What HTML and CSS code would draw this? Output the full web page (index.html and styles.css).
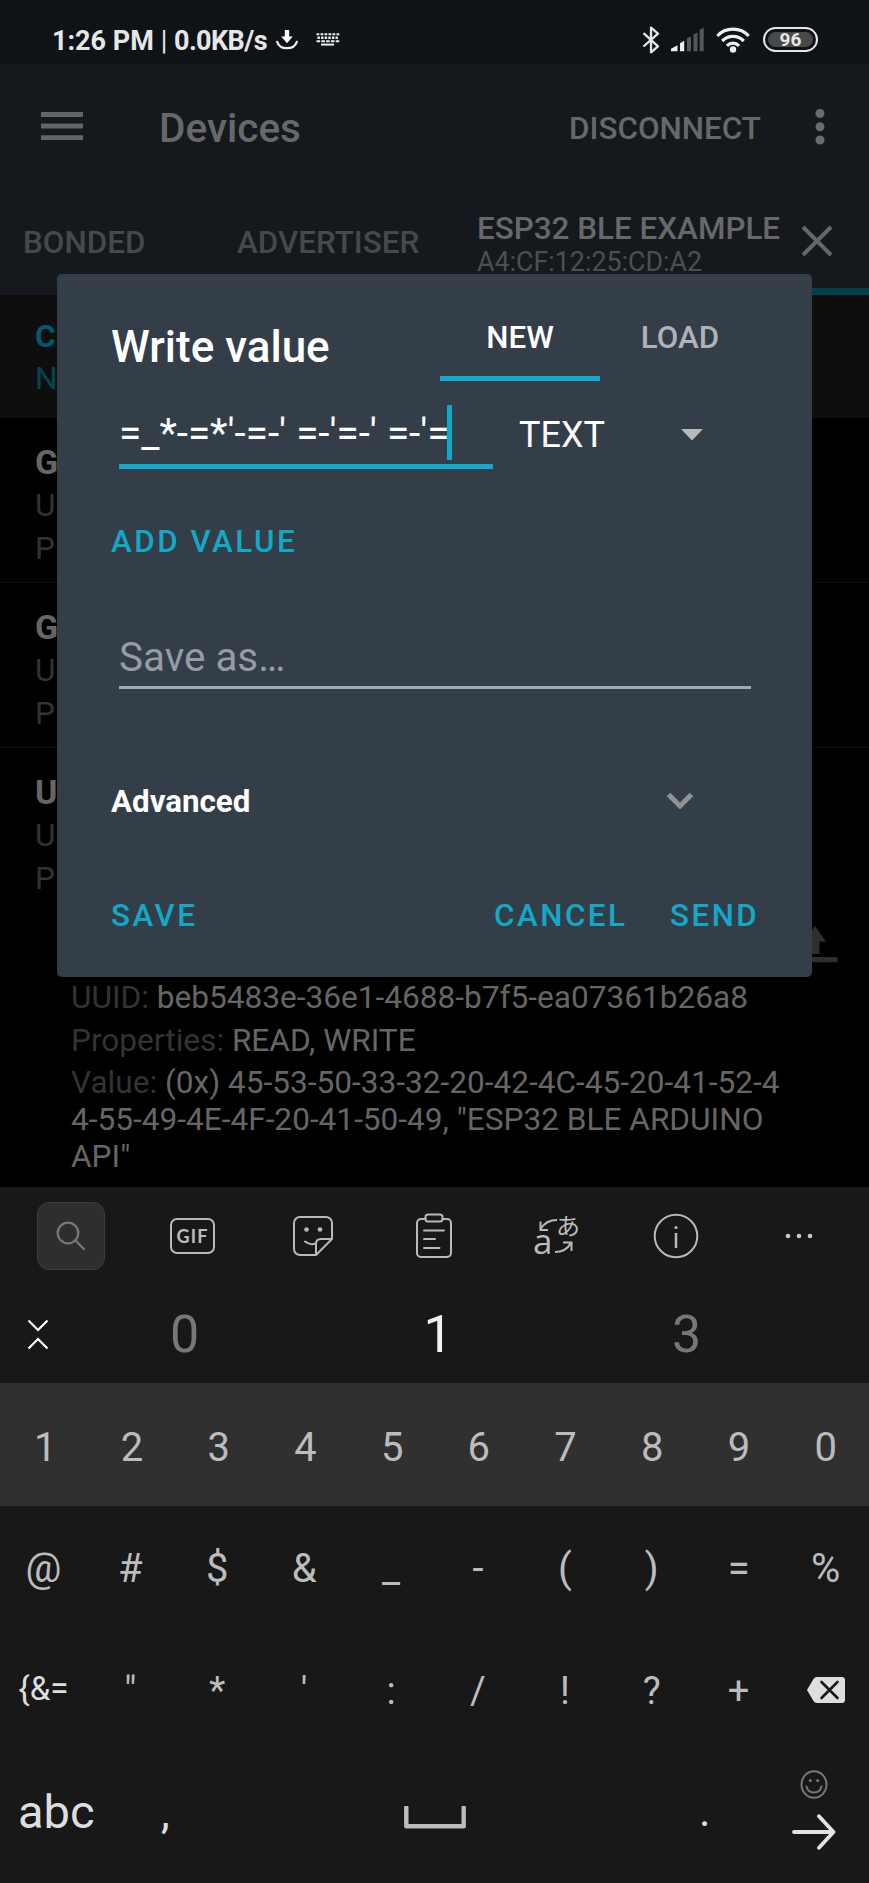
FILE: index.html
```html
<!DOCTYPE html>
<html lang="en">
<head>
<meta charset="utf-8">
<title>Devices</title>
<link rel="stylesheet" href="styles.css">
</head>
<body>
<div class="phone">
  <header class="status">
    <span class="status-time">1:26 PM</span><span class="status-sep">|</span><span class="status-rate">0.0KB/s</span>
    <svg class="ic-download" width="22" height="20" viewBox="0 0 22 20"><path d="M11 1.5v6" stroke="#fff" stroke-width="4.4" stroke-linecap="round"/><path d="M5.2 6.5h11.6L11 13.2z" fill="#fff"/><path d="M1.2 11.8C4 20.3 18 20.3 20.8 11.8" fill="none" stroke="#eee" stroke-width="2.2" stroke-linecap="round"/></svg>
    <svg class="ic-keyboard" width="24" height="13" viewBox="0 0 24 13"><g stroke="#eee" fill="none"><path d="M.5 1.3h23" stroke-width="2" stroke-dasharray="2.8 1.2"/><path d="M1.5 4.8h21" stroke-width="2.4" stroke-dasharray="2.4 1.2"/><path d="M.5 8.3h23" stroke-width="2" stroke-dasharray="3.6 1.2"/><path d="M5 11.6h13" stroke-width="2"/></g></svg>
    <span class="spacer"></span>
    <svg class="ic-bt" width="18" height="28" viewBox="0 0 18 28"><path d="M1.5 7.2 16 20.3 9 26.3V1.7l7 6L1.5 20.5" fill="none" stroke="#e6e6e6" stroke-width="2.3" stroke-linejoin="round"/></svg>
    <svg class="ic-signal" width="33" height="25" viewBox="0 0 33 25"><path d="M0 24.3v-2.6l6.5-3.4v6zM9 24.3v-8l4.200-2.500v10.500z" fill="#eee"/><path d="M16 24.300v-13l4-2v15zM22.500 24.300V7.500l4-2v18.800zM28.700 24.300V2.800l4-2.300v23.800z" fill="#55585a"/></svg>
    <svg class="ic-wifi" width="34" height="26" viewBox="0 0 34 26"><g fill="none" stroke="#eee" stroke-width="3.300"><path d="M1.300 9C9.500-.2 24.500-.2 32.700 9"/><path d="M6.200 14c6-6.200 15.600-6.200 21.600 0"/><path d="M11 18.800c3.500-3.500 8.500-3.500 12 0"/></g><circle cx="17" cy="22.500" r="3.200" fill="#eee"/></svg>
    <span class="battery"><span class="battery-level">96</span></span>
  </header>

  <div class="appbar">
    <svg class="ic-menu" width="42" height="28" viewBox="0 0 42 28"><path d="M0 2.500h42M0 14h42M0 25.700h42" stroke="#636465" stroke-width="4.800"/></svg>
    <span class="appbar-title">Devices</span>
    <span class="appbar-action">DISCONNECT</span>
    <svg class="ic-more" width="10" height="38" viewBox="0 0 10 38"><g fill="#6b6c6d"><circle cx="5" cy="5.500" r="4.500"/><circle cx="5" cy="18.800" r="4.500"/><circle cx="5" cy="32" r="4.500"/></g></svg>
  </div>

  <nav class="tabs">
    <span class="tab tab-bonded">BONDED</span>
    <span class="tab tab-adv">ADVERTISER</span>
    <div class="tab-device">
      <span class="device-name">ESP32 BLE EXAMPLE</span>
      <span class="device-mac">A4:CF:12:25:CD:A2</span>
    </div>
    <svg class="ic-close" width="32" height="32" viewBox="0 0 32 32"><path d="M2 2l28 28M30 2 2 30" stroke="#656769" stroke-width="4"/></svg>
    <div class="tab-line"></div>
  </nav>

  <main class="list">
    <div class="conn"><b>C</b><span>N</span></div>
    <div class="service"><b>G</b><span>U</span><span>P</span></div>
    <div class="service"><b>G</b><span>U</span><span>P</span></div>
    <div class="service service-last"><b>U</b><span>U</span><span>P</span></div>
    <div class="char">
      <svg class="ic-upload" width="46" height="37" viewBox="0 0 46 37"><path d="M23 0 34 15.500h-6.500V28h-9V15.500H12zM1 31h44.500v5.300H1z" fill="#2e2e2e"/></svg>
      <p class="char-row"><span class="dim">UUID:</span> beb5483e-36e1-4688-b7f5-ea07361b26a8</p>
      <p class="char-row"><span class="dim">Properties:</span> READ, WRITE</p>
      <p class="char-value"><span class="dim">Value:</span> (0x) 45-53-50-33-32-20-42-4C-45-20-41-52-4<br>4-55-49-4E-4F-20-41-50-49, "ESP32 BLE ARDUINO<br>API"</p>
    </div>
  </main>

  <section class="keyboard">
    <div class="tools">
      <span class="tool-search"><svg width="30" height="30" viewBox="0 0 30 30"><g fill="none" stroke="#777" stroke-width="2.300" stroke-linecap="round"><circle cx="12" cy="12" r="10.300"/><path d="m19.500 19.500 8.500 8.500"/></g></svg></span>
      <span class="tool-gif">GIF</span>
      <svg class="tool-sticker" width="42" height="42" viewBox="0 0 42 42"><g fill="none" stroke="#b9b9b9" stroke-width="2" stroke-linejoin="round" stroke-linecap="round"><path d="M24 40H8a6 6 0 0 1-6-6V8a6 6 0 0 1 6-6h26a6 6 0 0 1 6 6v16L24 40V29q0-5 5-5h11"/><path d="M13 26.500q5 4 10.500 2"/></g><circle cx="14.500" cy="14.500" r="2.300" fill="#b9b9b9"/><circle cx="28" cy="14.500" r="2.300" fill="#b9b9b9"/></svg>
      <svg class="tool-clip" width="38" height="46" viewBox="0 0 38 46"><g fill="none" stroke="#b9b9b9" stroke-width="2" stroke-linecap="round"><rect x="10.500" y="1.500" width="17" height="7" rx="2.500"/><path d="M10.500 6H6a4 4 0 0 0-4 4v30a4 4 0 0 0 4 4h26a4 4 0 0 0 4-4V10a4 4 0 0 0-4-4h-4.500M9 17.500h20M9 26h11M9 35h15.500"/></g></svg>
      <span class="tool-lang"><span class="lang-a">a</span><span class="lang-ja">あ</span><svg class="lang-arrows" width="46" height="46" viewBox="0 0 46 46"><g fill="none" stroke="#b9b9b9" stroke-width="2"><path d="M24 7Q13 7 7.500 16M7.500 8.500V17H15M22 39q11 0 15.500-8.500M30 29.500h8.500V38"/></g></svg></span>
      <svg class="tool-info" width="46" height="46" viewBox="0 0 46 46"><circle cx="23" cy="23" r="21.300" fill="none" stroke="#b9b9b9" stroke-width="2"/><path d="M23 20v15" stroke="#b9b9b9" stroke-width="2.500"/><circle cx="23" cy="14.500" r="1.600" fill="#b9b9b9"/></svg>
      <svg class="tool-dots" width="28" height="6" viewBox="0 0 28 6"><g fill="#c8c8c8"><circle cx="3" cy="3" r="2.300"/><circle cx="14" cy="3" r="2.300"/><circle cx="25" cy="3" r="2.300"/></g></svg>
    </div>
    <div class="suggest">
      <svg class="ic-collapse" width="22" height="31" viewBox="0 0 22 31"><path d="m1.500 1.500 9.500 9.500L20.500 1.500M1.500 29.500 11 20l9.500 9.500" fill="none" stroke="#fff" stroke-width="2.200"/></svg>
      <span class="sg">0</span><span class="sg sg-main">1</span><span class="sg">3</span>
    </div>
    <div class="keys keys-num"><span>1</span><span>2</span><span>3</span><span>4</span><span>5</span><span>6</span><span>7</span><span>8</span><span>9</span><span>0</span></div>
    <div class="keys"><span>@</span><span>#</span><span>$</span><span>&amp;</span><span>_</span><span>-</span><span>(</span><span>)</span><span>=</span><span>%</span></div>
    <div class="keys keys-punct"><span class="key-more">{&amp;=</span><span>"</span><span>*</span><span>'</span><span>:</span><span>/</span><span>!</span><span>?</span><span>+</span><span class="key-del"><svg width="40" height="28" viewBox="0 0 40 28"><path d="M1 14 7.500 3Q9 1 11 1h25q3 0 3 3v20q0 3-3 3H11q-2 0-3.500-2z" fill="#dedede"/><path d="m15.500 6 16 16M31.500 6l-16 16" stroke="#181818" stroke-width="2.600" stroke-linecap="round"/></svg></span></div>
    <div class="bottom">
      <span class="key-abc">abc</span>
      <span class="key-comma">,</span>
      <svg class="ic-space" width="62" height="23" viewBox="0 0 62 23"><path d="M2.300 1.500v18.700h57.400V1.500" fill="none" stroke="#bcbcbc" stroke-width="4.400" stroke-linejoin="round" stroke-linecap="round"/></svg>
      <span class="key-dot">.</span>
      <div class="enter">
        <svg width="28" height="29" viewBox="0 0 28 29"><g fill="none" stroke="#777" stroke-width="2"><ellipse cx="14" cy="14.500" rx="12.500" ry="13.200"/><path d="M6.500 16.500q1.500 6 7.500 6t7.500-6" stroke-linecap="round"/></g><circle cx="10.300" cy="10.500" r="1.600" fill="#777"/><circle cx="17.700" cy="10.500" r="1.600" fill="#777"/></svg>
        <svg class="ic-arrow" width="44" height="36" viewBox="0 0 44 36"><path d="M2 18h39M27 2.200 41.500 18 27 33.800" fill="none" stroke="#e2e2e2" stroke-width="3.800" stroke-linecap="round" stroke-linejoin="round"/></svg>
      </div>
    </div>
  </section>

  <div class="dialog">
    <div class="dlg-head">
      <h1 class="dlg-title">Write value</h1>
      <span class="dlg-tab dlg-tab-on">NEW</span>
      <span class="dlg-tab">LOAD</span>
    </div>
    <div class="dlg-entry">
      <div class="dlg-input"><span class="dlg-text">=_*-=*'-=-' =-'=-' =-'=</span><span class="caret"></span></div>
      <span class="dlg-type">TEXT</span>
      <svg class="ic-drop" width="22" height="12" viewBox="0 0 22 12"><path d="M0 0h22L11 11.500z" fill="#b7b9bb"/></svg>
    </div>
    <div class="dlg-add">ADD VALUE</div>
    <div class="dlg-save-as">Save as…</div>
    <div class="dlg-adv"><b>Advanced</b><svg width="28" height="18" viewBox="0 0 28 18"><path d="M2.500 2.500 14 14 25.500 2.500" fill="none" stroke="#8f9396" stroke-width="5"/></svg></div>
    <div class="dlg-actions"><span class="act-save">SAVE</span><span class="act-cancel">CANCEL</span><span class="act-send">SEND</span></div>
  </div>
</div>
</body>
</html>
```
FILE: styles.css
```css
* { box-sizing: border-box; }
body { margin: 0; background: #000; font-family: Roboto, "Noto Sans", sans-serif; }
svg { display: block; flex: none; }
p, h1 { margin: 0; }
.phone { position: relative; width: 869px; height: 1883px; overflow: hidden; background: #000; white-space: nowrap; }
.spacer { flex: 1; }

.status { display: flex; align-items: center; height: 64px; padding: 18px 51px 0 52px; background: #0f1216; color: #e6e6e6; font-weight: 700; font-size: 27px; line-height: 46px; }
.status-time { width: 102px; }
.status-sep { width: 20px; text-align: center; font-weight: 400; }
.status-rate { width: 90px; letter-spacing: -0.6px; }
.ic-download { margin: -3px 0 0 12px; }
.ic-keyboard { margin: -3px 0 0 18px; }
.ic-bt { margin: -3px 11px 0 0; }
.ic-signal { margin: -3px 12px 0 0; }
.ic-wifi { margin: -3px 13px 0 0; }
.battery { display: flex; width: 55px; height: 25px; margin-top: -3px; padding: 3px; border: 2px solid #e6e6e6; border-radius: 13px; }
.battery-level { flex: 1; border-radius: 8px; background: #47494b; font-size: 19px; line-height: 16px; text-align: center; }

.appbar { display: flex; align-items: center; height: 128px; padding: 0 44px 0 41px; background: #15191d; color: #66686a; font-weight: 500; }
.ic-menu { margin-top: -5px; }
.appbar-title { flex: 1; padding-left: 76px; font-size: 40.500px; }
.appbar-action { margin-right: 54px; font-size: 31.400px; }
.ic-more { margin-top: -3px; }

.tabs { position: relative; display: flex; height: 103px; background: #15191d; color: #46494c; font-size: 31.400px; font-weight: 500; line-height: 36px; }
.tab { padding-top: 33px; }
.tab-bonded { width: 237px; padding-left: 23px; }
.tab-adv { width: 240px; }
.tab-device { display: flex; flex-direction: column; width: 324px; padding-top: 19px; color: #66686a; }
.device-mac { margin-top: -3px; font-size: 26.800px; font-weight: 400; color: #4c4f52; }
.ic-close { margin-top: 33px; }
.tab-line { position: absolute; left: 477px; right: 0; bottom: 0; height: 7px; background: #003f4b; }

.list { height: 892px; font-size: 31.600px; }
.list b, .list .conn span, .list .service span { display: block; }
.conn { height: 123px; padding: 21px 0 0 35px; background: #0e0e0e; line-height: 42px; color: #004653; }
.conn b { color: #005a6b; }
.service { height: 165px; padding: 22px 0 0 35px; border-bottom: 1px solid #0d0d0d; line-height: 43px; color: #333; }
.service b { font-size: 34px; line-height: 44px; color: #666; }
.service-last { height: 177px; border: 0; }
.char { padding-left: 71px; color: #666; }
.dim { color: #333; }
.ic-upload { margin: 1px 0 13px 721px; }
.char-row { line-height: 43px; }
.char-value { margin-top: 2px; line-height: 37px; }

.keyboard { height: 696px; background: #181818; color: #bcbcbc; }
.tools { display: flex; align-items: center; height: 98px; padding-left: 37px; }
.tool-search { display: grid; place-items: center; width: 68px; height: 68px; border: 1px solid #3c3c3c; border-radius: 12px; background: #2e2e2e; }
.tool-gif { width: 45px; height: 36px; margin-left: 65px; border: 2px solid #b9b9b9; border-radius: 7px; font-family: Lato, sans-serif; font-size: 18px; font-weight: 700; line-height: 33px; letter-spacing: 1.200px; text-align: center; }
.tool-sticker { margin-left: 77px; }
.tool-clip { margin-left: 81px; }
.tool-lang { position: relative; width: 46px; height: 46px; margin-left: 80px; }
.lang-a { position: absolute; left: 0; top: 10px; font: 35px/35px "Open Sans", sans-serif; }
.lang-ja { position: absolute; left: 23px; top: -1px; font: 24px/25px "Noto Sans CJK JP", sans-serif; }
.lang-arrows { position: absolute; left: 0; top: 0; }
.tool-info { margin-left: 74px; }
.tool-dots { margin-left: 86px; }

.suggest { display: flex; align-items: center; height: 98px; padding: 0 58px 0 27px; }
.sg { flex: 0 0 251px; font-size: 52px; text-align: center; color: #777; }
.ic-collapse { margin-right: 10px; }
.sg-main { padding-left: 5px; color: #f2f2f2; }

.keys { display: grid; grid-template-columns: repeat(10, 1fr); height: 122px; padding-top: 2px; font-size: 40px; text-align: center; }
.keys span { display: grid; place-items: center; }
.keys-num { height: 123px; padding: 6px 0 0 2px; background: #303030; }
.keys-punct { padding-top: 4px; font-size: 38px; }
.keys .key-more { padding-bottom: 5px; font-size: 33px; color: #dedede; }
.keys .key-del { padding-bottom: 2px; }

.bottom { display: flex; height: 133px; color: #dedede; }
.key-abc { width: 142px; padding-left: 18px; font-size: 47px; line-height: 124px; }
.key-comma { width: 262px; padding-left: 19px; font-size: 44px; line-height: 126px; }
.ic-space { margin-top: 56px; }
.key-dot { width: 325px; padding-left: 233px; font-size: 44px; line-height: 122px; }
.enter { display: flex; flex-direction: column; align-items: center; width: 44px; padding-top: 20px; margin-left: 1px; }
.ic-arrow { margin-top: 15px; }

.dialog { position: absolute; left: 57px; top: 274px; width: 755px; height: 703px; border-radius: 5px; background: #333e48; color: #fff; font-size: 31.300px; }
.dlg-head { display: flex; height: 107px; font-weight: 500; }
.dlg-title { width: 383px; padding-left: 54px; font-size: 44px; font-weight: 500; line-height: 147px; }
.dlg-tab { width: 160px; line-height: 128px; text-align: center; color: #afb2b6; }
.dlg-tab-on { border-bottom: 5px solid #0faacb; color: #fff; }
.dlg-entry { display: flex; height: 115px; padding-left: 62px; }
.dlg-input { display: flex; width: 374px; height: 88px; border-bottom: 5px solid #0faacb; font-size: 40.400px; line-height: 106px; }
.dlg-text { width: 328px; }
.caret { width: 5px; height: 55px; margin-top: 24px; background: #0faacb; }
.dlg-type { width: 188px; padding-left: 26px; font-size: 36px; line-height: 109px; }
.ic-drop { margin-top: 48px; }
.dlg-add { height: 90px; padding-left: 54px; font-weight: 500; line-height: 92px; letter-spacing: 2.500px; color: #12a9c8; }
.dlg-save-as { width: 632px; height: 103px; margin-left: 62px; border-bottom: 3px solid #a3abb0; padding-top: 48px; font-size: 40.400px; line-height: 47px; color: #959ca3; }
.dlg-adv { display: flex; align-items: center; height: 224px; padding: 0 118px 0 54px; justify-content: space-between; }
.dlg-actions { display: flex; margin-top: -15px; padding-left: 54px; font-weight: 500; line-height: 36px; letter-spacing: 2.500px; color: #12a9c8; }
.act-save { width: 383px; }
.act-cancel { width: 176px; }
```
